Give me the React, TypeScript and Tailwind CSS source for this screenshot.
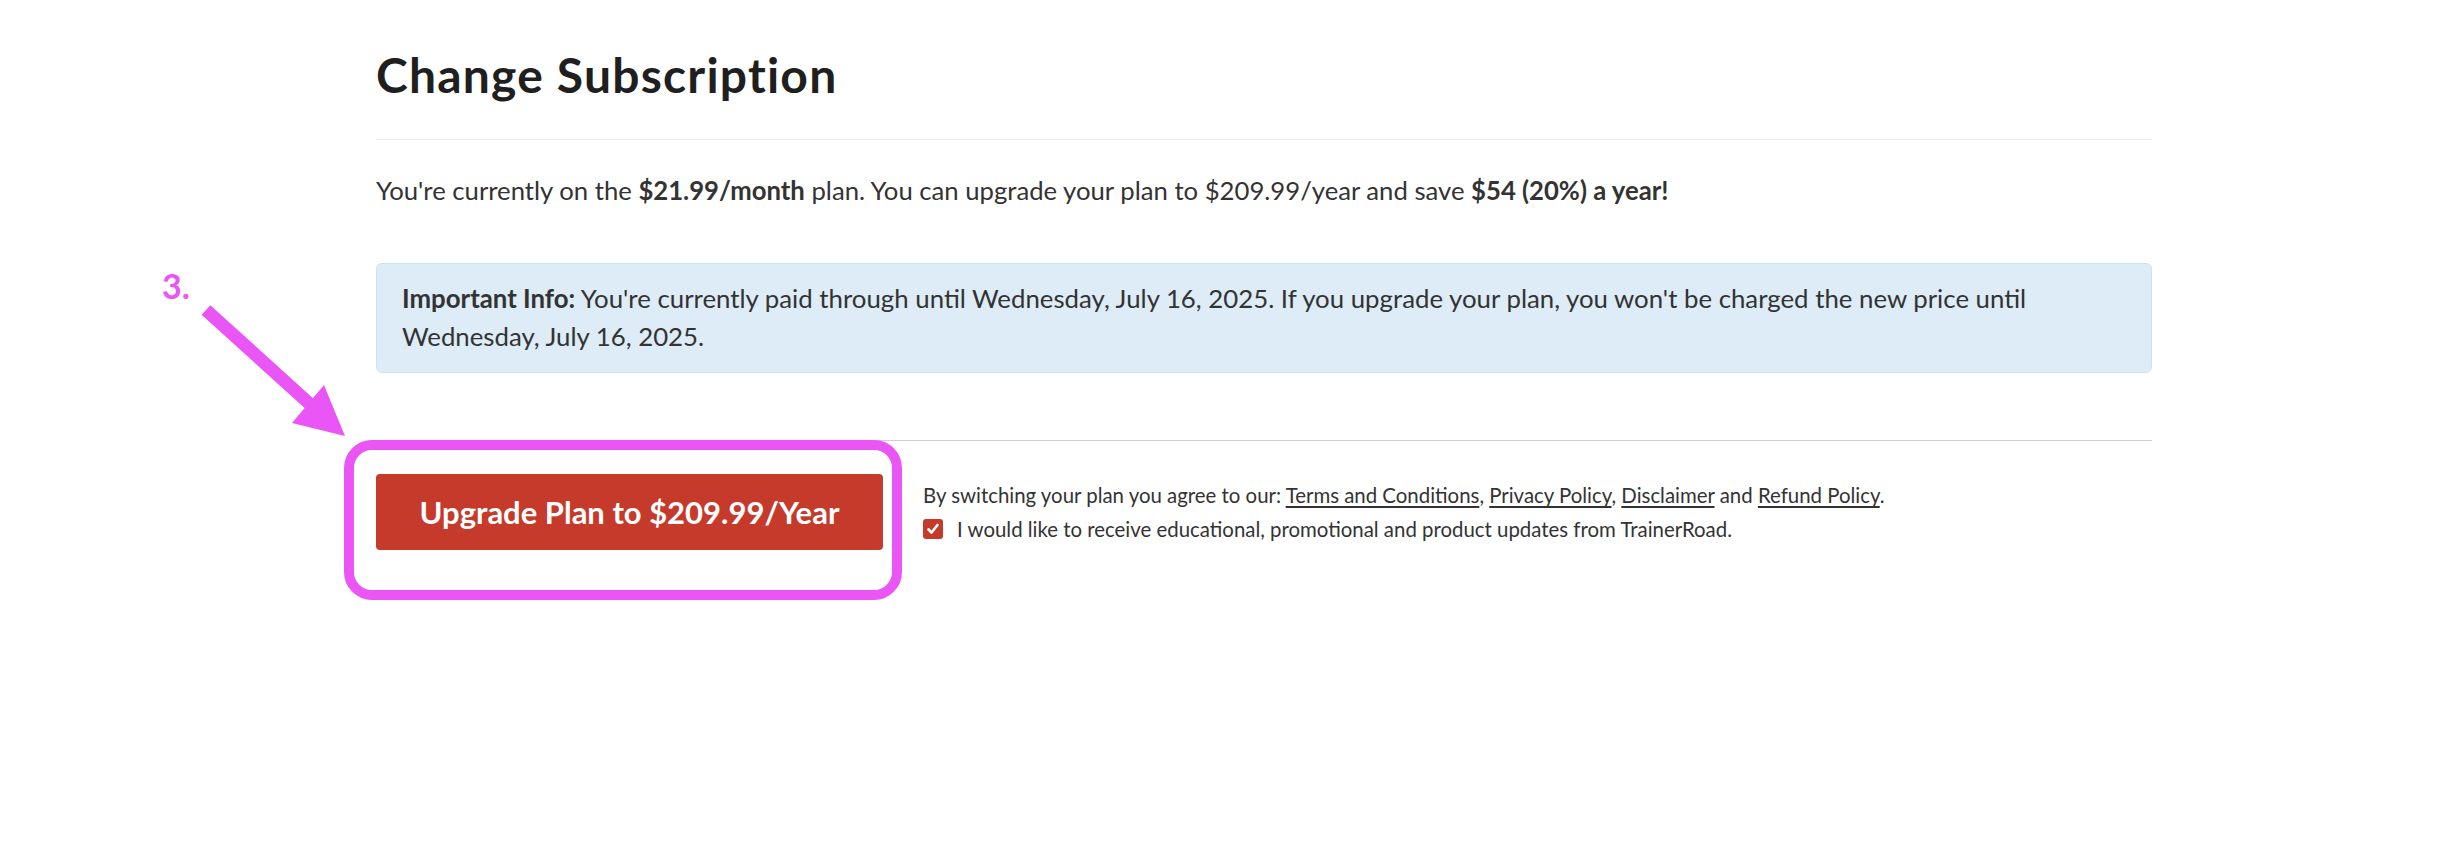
import React from "react";

export default function App() {
  return (
    <div className="relative min-h-[864px] w-[2440px] bg-white text-[#333] [font-family:Lato,'Open_Sans',sans-serif]">
      <div className="ml-[376px] w-[1776px] pt-[50px]">
        <h1 className="h-[50px] text-[48px] font-bold leading-[50px] tracking-[1.2px] text-[#1f1f1f]">Change Subscription</h1>
        <div className="mt-[39px] h-px bg-[#ebebeb]" />
        <p className="mt-[30px] text-[25.7px] leading-[40px]">
          You're currently on the <b>$21.99/month</b> plan. You can upgrade your plan to $209.99/year and save{" "}
          <b>$54 (20%) a year!</b>
        </p>
        <div className="mt-[53px] rounded-[6px] border border-[#c9e3ee] bg-[#ddecf6] pl-[25px] pr-[25px] pt-[15px] pb-[17px] text-[25.8px] leading-[38px]">
          <b>Important Info:</b> You're currently paid through until Wednesday, July 16, 2025. If you upgrade your plan,
          you won't be charged the new price until Wednesday, July 16, 2025.
        </div>
        <div className="mt-[67px] h-px bg-[#cfcfcf]" />
        <div className="mt-[33px] flex items-start gap-[40px]">
          <div className="relative">
            <button className="flex h-[76px] w-[507px] items-center justify-center rounded-[4px] bg-[#c53a2b] text-[31px] font-bold text-white">
              Upgrade Plan to $209.99/Year
            </button>
            <div className="pointer-events-none absolute -left-[32px] -top-[34px] -right-[19px] -bottom-[50px] rounded-[28px] border-[10px] border-[#ea55f5]" />
          </div>
          <div className="pt-[4px] text-[20.4px] leading-[34px]">
            <div>
              By switching your plan you agree to our: <span className="underline underline-offset-[3px]">Terms and Conditions</span>,{" "}
              <span className="underline underline-offset-[3px]">Privacy Policy</span>,{" "}
              <span className="underline underline-offset-[3px]">Disclaimer</span> and{" "}
              <span className="underline underline-offset-[3px]">Refund Policy</span>.
            </div>
            <div className="flex items-center gap-[14px]">
              <span className="flex h-[20px] w-[20px] items-center justify-center rounded-[3px] bg-[#c53a2b]">
                <svg width="14" height="14" viewBox="0 0 14 14">
                  <path d="M2.5 7.5 L5.5 10.5 L11.5 3" fill="none" stroke="white" strokeWidth="2.6" strokeLinecap="round" strokeLinejoin="round" />
                </svg>
              </span>
              <span>I would like to receive educational, promotional and product updates from TrainerRoad.</span>
            </div>
          </div>
        </div>
      </div>

      <div className="absolute left-[162px] top-[266px] text-[34px] font-bold leading-[40px] text-[#ea55f5]">3.</div>
      <svg className="pointer-events-none absolute left-0 top-0" width="400" height="480" viewBox="0 0 400 480">
        <line x1="206" y1="310" x2="312" y2="406" stroke="#ea55f5" strokeWidth="13" />
        <polygon points="345,436 292,423 324,385" fill="#ea55f5" />
      </svg>
    </div>
  );
}
